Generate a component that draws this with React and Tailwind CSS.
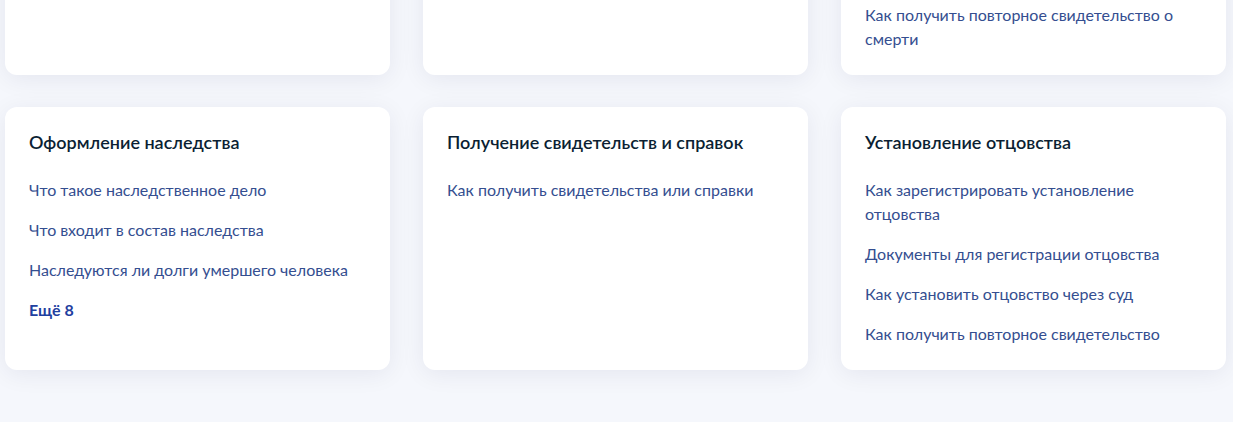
import React from 'react';

const sections = [
    {
        title: 'Регистрация рождения',
        links: ['Как зарегистрировать рождение ребёнка', 'Документы для регистрации'],
    },
    {
        title: 'Регистрация брака',
        links: ['Как подать заявление', 'Как выбрать дату регистрации'],
    },
    {
        title: 'Регистрация смерти',
        links: [
            'Как зарегистрировать смерть',
            'Документы для регистрации смерти',
            'Как получить повторное свидетельство о смерти',
        ],
    },
    {
        title: 'Оформление наследства',
        links: [
            'Что такое наследственное дело',
            'Что входит в состав наследства',
            'Наследуются ли долги умершего человека',
        ],
        more: 8,
    },
    {
        title: 'Получение свидетельств и справок',
        links: ['Как получить свидетельства или справки'],
    },
    {
        title: 'Установление отцовства',
        links: [
            'Как зарегистрировать установление отцовства',
            'Документы для регистрации отцовства',
            'Как установить отцовство через суд',
            'Как получить повторное свидетельство',
        ],
    },
];

const SectionCard = ({ title, links, more }) => (
    <div className="bg-white rounded-xl p-6 shadow-[0_4px_24px_rgba(0,20,67,0.07)]">
        <h3 className="text-[18px] leading-[22px] font-semibold text-[#0b1f33]">{title}</h3>
        <ul className="mt-[25px] flex flex-col gap-4">
            {links.map((link) => (
                <li key={link}>
                    <a href="#" className="block text-base leading-6 text-[#344e90]">
                        {link}
                    </a>
                </li>
            ))}
            {more && (
                <li>
                    <a href="#" className="block text-base leading-6 font-bold text-[#1f40a0]">
                        Ещё {more}
                    </a>
                </li>
            )}
        </ul>
    </div>
);

export default function App() {
    return (
        <div
            className="h-[422px] overflow-hidden bg-[#f5f7fc] pl-[5px] pr-[7px]"
            style={{ fontFamily: 'Lato, "Noto Sans", sans-serif' }}
        >
            <div className="-mt-[148px] grid grid-cols-3 gap-x-[33px] gap-y-8">
                {sections.map((s) => (
                    <SectionCard key={s.title} {...s} />
                ))}
            </div>
        </div>
    );
}
